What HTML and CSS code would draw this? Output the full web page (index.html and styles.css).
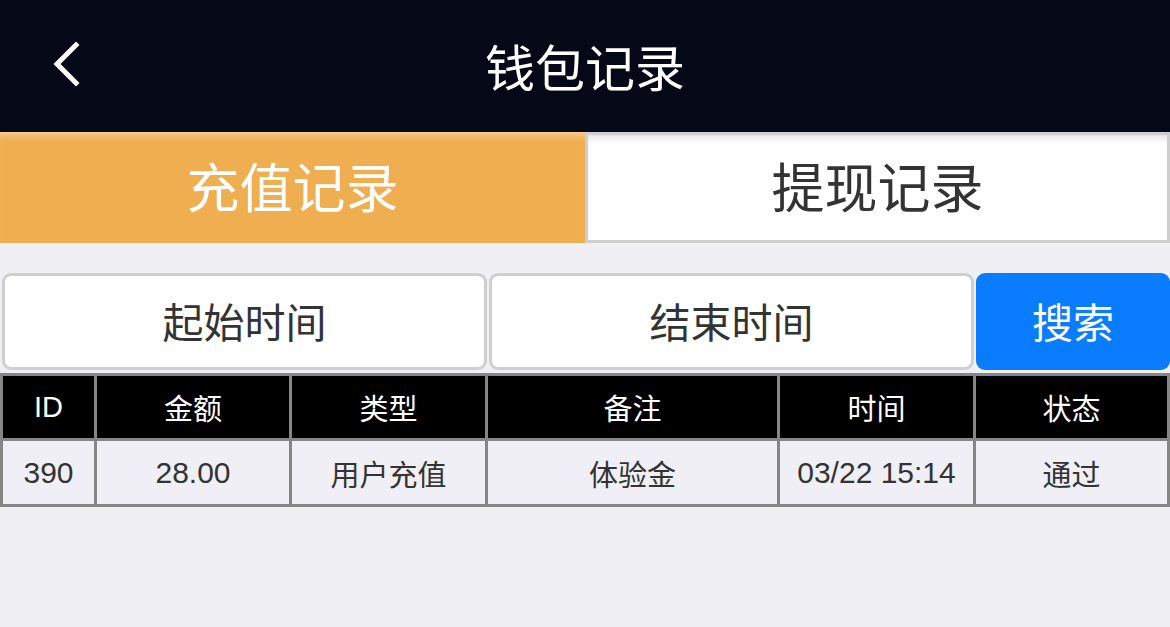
FILE: index.html
```html
<!DOCTYPE html>
<html lang="zh-CN">
<head>
    <meta charset="UTF-8">
    <meta name="viewport" content="width=device-width, initial-scale=1.0">
    <title>钱包记录</title>
    <link rel="stylesheet" href="styles.css">
</head>
<body>
    <header class="top-bar">
        <span class="back-btn">
            <svg width="32" height="46" viewBox="0 0 32 46">
                <path d="M27 4 L8 23 L27 42" fill="none" stroke="#fff" stroke-width="5" stroke-linecap="square"/>
            </svg>
        </span>
        <h1>钱包记录</h1>
    </header>

    <div class="tabs">
        <div class="tab active">充值记录</div>
        <div class="tab">提现记录</div>
    </div>

    <div class="search-row">
        <div class="date-input">起始时间</div>
        <div class="date-input">结束时间</div>
        <button class="search-btn">搜索</button>
    </div>

    <table class="records">
        <thead>
            <tr>
                <th class="col-id">ID</th>
                <th class="col-amount">金额</th>
                <th class="col-type">类型</th>
                <th class="col-note">备注</th>
                <th class="col-time">时间</th>
                <th class="col-status">状态</th>
            </tr>
        </thead>
        <tbody>
            <tr>
                <td class="num">390</td>
                <td class="num">28.00</td>
                <td>用户充值</td>
                <td>体验金</td>
                <td class="num">03/22 15:14</td>
                <td>通过</td>
            </tr>
        </tbody>
    </table>
</body>
</html>
```

FILE: styles.css
```css
body {
    margin: 0;
    background-color: #efeff4;
    font-family: "Liberation Sans", "Noto Sans CJK SC", sans-serif;
    color: #333;
}
.top-bar {
    height: 132px;
    background-color: #050816;
    display: flex;
    align-items: center;
    justify-content: center;
    position: relative;
}
.top-bar h1 {
    margin: 0 0 2px 0;
    font-family: "Noto Sans CJK SC", sans-serif;
    font-weight: normal;
    font-size: 50px;
    color: #fff;
}
.back-btn {
    position: absolute;
    left: 49px;
    top: 41px;
    display: flex;
}
.tabs {
    display: flex;
    height: 111px;
}
.tab {
    flex: 1;
    display: flex;
    align-items: center;
    justify-content: center;
    padding-bottom: 6px;
    font-family: "Noto Sans CJK SC", sans-serif;
    font-size: 53px;
    color: #333;
    background-color: #fff;
    border: 3px solid #cfcfcf;
    box-shadow: inset 0 8px 8px -6px rgba(0,0,0,0.15);
}
.tab.active {
    flex: 0 0 585px;
    background-color: #efae50;
    color: #fff;
    border: none;
    box-shadow: inset 0 9px 8px -6px rgba(255,255,255,0.45);
}
.search-row {
    display: grid;
    grid-template-columns: 485px 485px 1fr;
    gap: 2px;
    padding-left: 2px;
    margin-top: 30px;
    height: 97px;
}
.date-input, .search-btn {
    display: flex;
    align-items: center;
    justify-content: center;
    padding: 0 0 4px 0;
    font-family: "Noto Sans CJK SC", sans-serif;
    font-size: 41px;
    border-radius: 9px;
}
.date-input {
    background-color: #fff;
    border: 3px solid #cfcfcf;
    color: #333;
}
.search-btn {
    border: none;
    background-color: #0a7cff;
    color: #fff;
}
.records {
    margin-top: 3px;
    width: 100%;
    border-collapse: collapse;
    table-layout: fixed;
    font-size: 29px;
}
.records th, .records td {
    border: 3px solid #868686;
    text-align: center;
    font-weight: normal;
    font-family: "Liberation Sans", "Noto Sans CJK SC", sans-serif;
}
.records th {
    background-color: #000;
    color: #fff;
    height: 60px;
}
.records td {
    background-color: #f0eff5;
    color: #333;
    height: 61px;
}
.records td.num {
    font-size: 30px;
}
.col-id { width: 89px; }
.col-amount { width: 190px; }
.col-type { width: 191px; }
.col-note { width: 287px; }
.col-time { width: 191px; }
```
